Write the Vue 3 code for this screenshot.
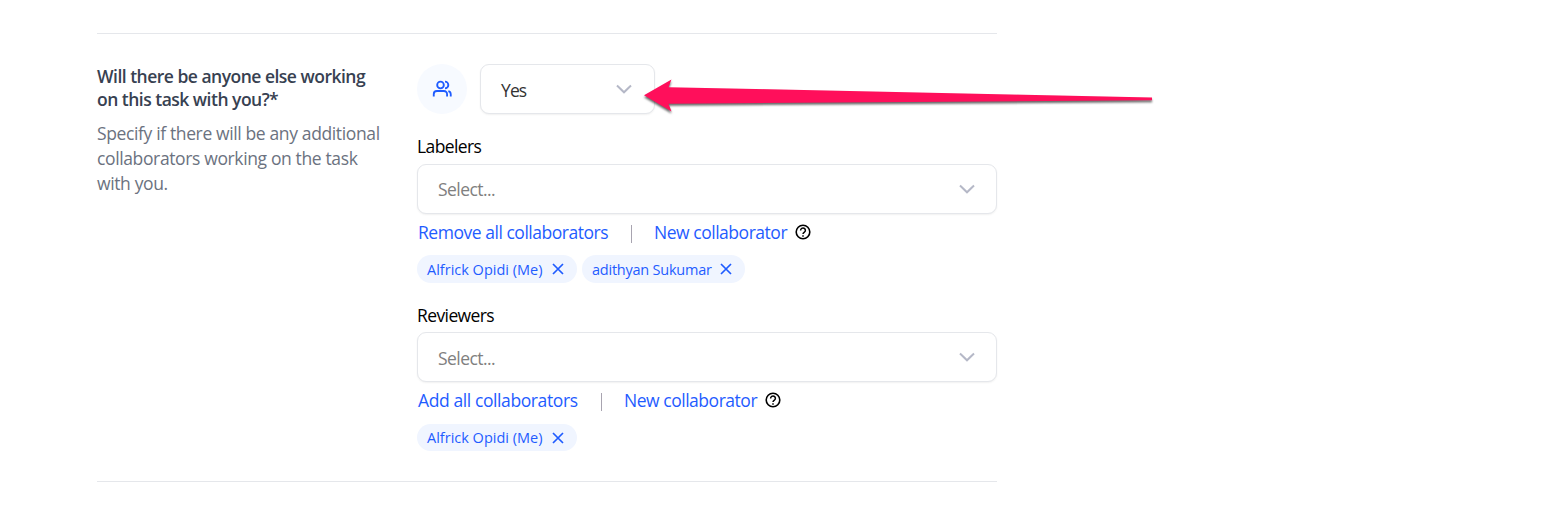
<script setup>
const groups = [
  {
    label: 'Labelers',
    action: 'Remove all collaborators',
    kind: 'labelers',
    people: ['Alfrick Opidi (Me)', 'adithyan Sukumar'],
  },
  {
    label: 'Reviewers',
    action: 'Add all collaborators',
    kind: 'reviewers',
    people: ['Alfrick Opidi (Me)'],
  },
]
</script>

<template>
  <main class="page">
    <section class="row">
      <div class="intro">
        <h2>Will there be anyone else working<br />on this task with you?*</h2>
        <p>Specify if there will be any additional<br />collaborators working on the task<br />with you.</p>
      </div>
      <div class="fields">
        <div class="choice">
          <div class="avatar">
            <svg width="24" height="24" viewBox="0 0 24 24" fill="none" stroke="#1f5cff" stroke-width="2.2">
              <circle cx="10.2" cy="7.2" r="4" />
              <path d="M2.1 21v-2.8a3.8 3.8 0 0 1 3.8-3.8h8.4a3.8 3.8 0 0 1 3.8 3.8V21M15.6 3.2a4 4 0 0 1 0 8M19.6 14.6a3.8 3.8 0 0 1 2.9 3.6V21" />
            </svg>
          </div>
          <div class="select small">
            <span class="value">Yes</span>
            <svg class="chevron" width="16" height="10" viewBox="0 0 16 10"><path d="M1 1.5 8 8.3 15 1.5" /></svg>
          </div>
        </div>
        <div v-for="g in groups" :key="g.kind" class="group" :class="g.kind">
          <label>{{ g.label }}</label>
          <div class="select">
            <span class="placeholder">Select...</span>
            <svg class="chevron" width="16" height="10" viewBox="0 0 16 10"><path d="M1 1.5 8 8.3 15 1.5" /></svg>
          </div>
          <div class="links">
            <a class="action">{{ g.action }}</a>
            <i class="divider"></i>
            <a class="new">New collaborator</a>
            <svg class="help" width="16" height="16" viewBox="0 0 16 16" fill="none" stroke="#000">
              <circle cx="8" cy="8" r="6.8" stroke-width="1.6" />
              <path d="M5.6 6.4a2.4 2.3 0 1 1 3.8 1.8C8.5 8.8 8 9.2 8 10M8 11.2v1.6" stroke-width="1.5" />
            </svg>
          </div>
          <div class="chips">
            <span v-for="(p, i) in g.people" :key="p" class="chip" :class="{ second: i === 1 }">
              <span>{{ p }}</span>
              <svg width="12" height="12" viewBox="0 0 12 12"><path d="M1 1 11 11M11 1 1 11" /></svg>
            </span>
          </div>
        </div>
      </div>
    </section>
    <svg class="arrow" width="520" height="50" viewBox="0 0 520 50">
      <path d="M4 25.3 31.5 9.5 28.5 17.2 512 27.4V30.2L28.5 33.7 31.5 41.5Z" />
    </svg>
  </main>
</template>

<style>
body {
  background: #fff;
}
</style>

<style scoped>
.page {
  position: relative;
  box-sizing: border-box;
  height: 506px;
  padding: 33px 0 0 97px;
  overflow: hidden;
  font-family: "Open Sans", "Noto Sans", sans-serif;
  font-weight: 400;
  color: #000;
}
.row {
  box-sizing: border-box;
  display: flex;
  width: 900px;
  height: 449px;
  padding-top: 30px;
  border-top: 1px solid #e5e7eb;
  border-bottom: 1px solid #e5e7eb;
}
.intro {
  width: 320px;
  flex: none;
  white-space: nowrap;
}
h2 {
  margin: 1px 0 0;
  font-size: 17.5px;
  line-height: 23px;
  font-weight: 600;
  letter-spacing: -0.51px;
  color: #374151;
}
p {
  margin: 10px 0 0;
  font-size: 17.5px;
  line-height: 25px;
  letter-spacing: -0.37px;
  color: #6b7280;
}
.fields {
  width: 580px;
}
.choice {
  display: flex;
  gap: 13px;
  height: 50px;
}
.avatar {
  display: flex;
  align-items: center;
  justify-content: center;
  width: 50px;
  height: 50px;
  border-radius: 50%;
  background: #f7faff;
}
.avatar svg {
  width: 20px;
  height: 20px;
}
.select {
  box-sizing: border-box;
  display: flex;
  align-items: center;
  justify-content: space-between;
  height: 50px;
  padding: 0 21.5px 0 20px;
  border: 1px solid #e5e7eb;
  border-radius: 9px;
  background: #fff;
  box-shadow: 0 1px 2px rgba(0, 0, 0, 0.06);
  font-size: 17.5px;
  line-height: 24px;
}
.small {
  width: 175px;
  padding-right: 22.5px;
}
.value {
  color: #333;
  letter-spacing: -0.9px;
  padding-top: 2px;
}
.placeholder {
  color: #808080;
  letter-spacing: -0.55px;
}
.reviewers .placeholder {
  padding-top: 2px;
}
.chevron path {
  fill: none;
  stroke: #b5b8c7;
  stroke-width: 2;
}
.group {
  height: 168px;
  padding-top: 20px;
}
.group + .group {
  height: auto;
  padding-top: 0;
}
label {
  display: block;
  height: 30px;
  line-height: 24px;
  font-size: 17.5px;
  letter-spacing: -0.6px;
}
.reviewers label {
  height: 29px;
}
.group.labelers {
  height: 169px;
  box-sizing: border-box;
  margin-bottom: 20px;
}
.links {
  display: flex;
  align-items: center;
  height: 36px;
  padding-bottom: 1px;
  padding-left: 1px;
  font-size: 17.5px;
  letter-spacing: -0.47px;
  color: #1f5cff;
  white-space: nowrap;
}
.action {
  width: 190px;
}
.reviewers .action {
  width: 160px;
  letter-spacing: -0.4px;
}
.divider {
  width: 1px;
  height: 18px;
  margin: 3px 22.5px 0 22.5px;
  background: #a8a4b0;
}
.new {
  width: 141px;
}
.chips {
  display: flex;
  gap: 5px;
  margin-top: 4px;
}
.reviewers .chips {
  margin-top: 5px;
}
.chip {
  box-sizing: border-box;
  display: flex;
  align-items: center;
  justify-content: space-between;
  width: 160px;
  height: 28px;
  padding: 0 13px 0 10px;
  border-radius: 14px;
  background: #f0f5ff;
  color: #1f5cff;
  font-size: 14.5px;
  white-space: nowrap;
}
.reviewers .chip {
  height: 27px;
}
.second {
  width: 163px;
  letter-spacing: -0.23px;
}
.chip path {
  fill: none;
  stroke: #1f5cff;
  stroke-width: 1.7;
}
.arrow {
  position: absolute;
  left: 640px;
  top: 70px;
}
.arrow path {
  fill: #ff0f5b;
  filter: drop-shadow(0 2px 1px rgba(0, 0, 0, 0.6));
}
</style>
